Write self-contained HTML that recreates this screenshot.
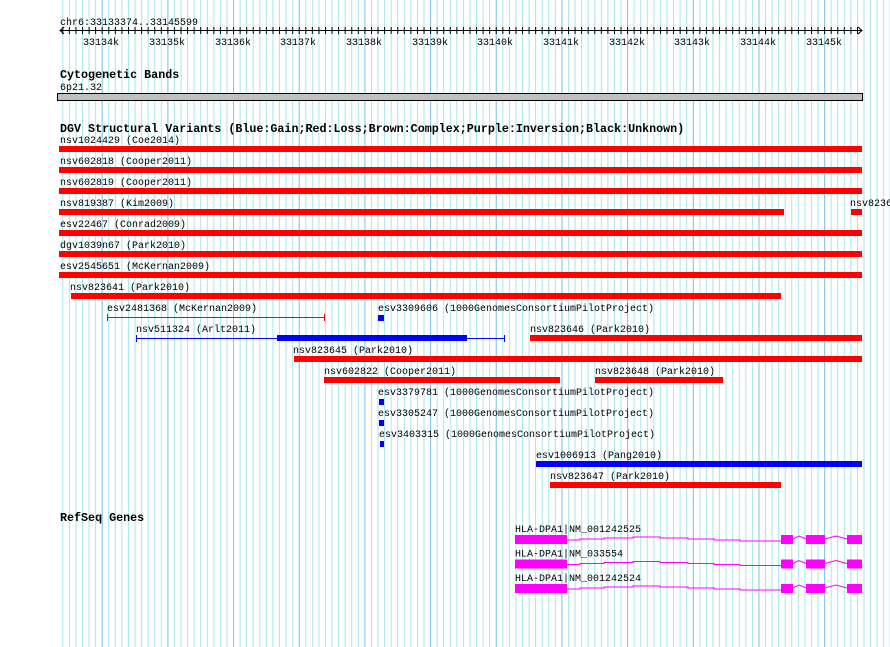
<!DOCTYPE html>
<html><head><meta charset="utf-8"><style>
html,body{margin:0;padding:0;background:#fff;}
svg{display:block;}
text{font-family:"Liberation Mono",monospace;font-size:10px;fill:#000;}
.b{font-weight:bold;font-size:11.7px;}
</style></head><body>
<svg width="890" height="647" xmlns="http://www.w3.org/2000/svg">
<defs>
<pattern id="mn" x="101.7" y="0" width="6.5675" height="647" patternUnits="userSpaceOnUse"><rect x="0" y="0" width="1" height="647" fill="#a8e4ee"/></pattern>
<pattern id="mj" x="101.7" y="0" width="65.675" height="647" patternUnits="userSpaceOnUse"><rect x="0" y="0" width="1" height="647" fill="#88c4e8"/></pattern>
<pattern id="tk" x="101.7" y="0" width="6.5675" height="647" patternUnits="userSpaceOnUse"><rect x="0" y="27" width="1" height="7" fill="#000"/></pattern>
<g id="gs">
<rect x="515" y="535" width="52" height="9" fill="#f0f"/>
<polyline points="567,540 580,540 580,539 604,539 604,538 633,538 633,537 660,537 660,538 688,538 688,539 714,539 714,540 740,540 740,541 781,541" fill="none" stroke="#f0f"/>
<rect x="781" y="535" width="12" height="9" fill="#f0f"/>
<polyline points="793,539 799,536 806,539" fill="none" stroke="#f0f"/>
<rect x="806" y="535" width="19" height="9" fill="#f0f"/>
<polyline points="825,539 836,536 847,539" fill="none" stroke="#f0f"/>
<rect x="847" y="535" width="15" height="9" fill="#f0f"/>
</g>
</defs>
<rect x="59" y="0" width="831" height="647" fill="url(#mn)"/>
<rect x="59" y="0" width="831" height="647" fill="url(#mj)"/>
<text x="60" y="25">chr6:33133374..33145599</text>
<rect x="60" y="30" width="802" height="1" fill="#000"/>
<rect x="60" y="0" width="802" height="647" fill="url(#tk)" clip-path="inset(27px 0 613px 0)"/>
<path d="M64 27 L60 30.5 L64 34 M858 27 L862 30.5 L858 34" stroke="#000" fill="none"/>
<g text-anchor="middle">
<text x="101" y="45">33134k</text><text x="167" y="45">33135k</text><text x="233" y="45">33136k</text><text x="298" y="45">33137k</text><text x="364" y="45">33138k</text><text x="430" y="45">33139k</text><text x="495" y="45">33140k</text><text x="561" y="45">33141k</text><text x="627" y="45">33142k</text><text x="692" y="45">33143k</text><text x="758" y="45">33144k</text><text x="824" y="45">33145k</text>
</g>
<text class="b" x="60" y="78">Cytogenetic Bands</text>
<text x="60" y="90">6p21.32</text>
<rect x="57.5" y="93.5" width="805" height="7" fill="#c0c0c0" stroke="#000"/>
<text class="b" x="60" y="132">DGV Structural Variants (Blue:Gain;Red:Loss;Brown:Complex;Purple:Inversion;Black:Unknown)</text>
<g>
<text x="60" y="143">nsv1024429 (Coe2014)</text><rect x="59" y="146" width="803" height="6" fill="#f00"/>
<text x="60" y="164">nsv602818 (Cooper2011)</text><rect x="59" y="167" width="803" height="6" fill="#f00"/>
<text x="60" y="185">nsv602819 (Cooper2011)</text><rect x="59" y="188" width="803" height="6" fill="#f00"/>
<text x="60" y="206">nsv819387 (Kim2009)</text><rect x="59" y="209" width="725" height="6" fill="#f00"/>
<text x="850" y="206">nsv823647</text><rect x="851" y="209" width="11" height="6" fill="#f00"/>
<text x="60" y="227">esv22467 (Conrad2009)</text><rect x="59" y="230" width="803" height="6" fill="#f00"/>
<text x="60" y="248">dgv1039n67 (Park2010)</text><rect x="59" y="251" width="803" height="6" fill="#f00"/>
<text x="60" y="269">esv2545651 (McKernan2009)</text><rect x="59" y="272" width="803" height="6" fill="#f00"/>
<text x="70" y="290">nsv823641 (Park2010)</text><rect x="71" y="293" width="710" height="6" fill="#f00"/>
<text x="107" y="311">esv2481368 (McKernan2009)</text>
<rect x="107" y="317" width="218" height="1" fill="#f00"/><rect x="107" y="314" width="1" height="7" fill="#f00"/><rect x="324" y="314" width="1" height="7" fill="#f00"/>
<text x="378" y="311">esv3309606 (1000GenomesConsortiumPilotProject)</text><rect x="378" y="315" width="6" height="6" fill="#00f"/>
<text x="136" y="332">nsv511324 (Arlt2011)</text>
<rect x="136" y="338" width="369" height="1" fill="#00f"/><rect x="136" y="335" width="1" height="7" fill="#00f"/><rect x="504" y="335" width="1" height="7" fill="#00f"/>
<rect x="277" y="335" width="190" height="6" fill="#00f"/>
<text x="530" y="332">nsv823646 (Park2010)</text><rect x="530" y="335" width="332" height="6" fill="#f00"/>
<text x="293" y="353">nsv823645 (Park2010)</text><rect x="294" y="356" width="568" height="6" fill="#f00"/>
<text x="324" y="374">nsv602822 (Cooper2011)</text><rect x="324" y="377" width="236" height="6" fill="#f00"/>
<text x="595" y="374">nsv823648 (Park2010)</text><rect x="595" y="377" width="128" height="6" fill="#f00"/>
<text x="378" y="395">esv3379781 (1000GenomesConsortiumPilotProject)</text><rect x="379" y="399" width="5" height="6" fill="#00f"/>
<text x="378" y="416">esv3305247 (1000GenomesConsortiumPilotProject)</text><rect x="379" y="420" width="5" height="6" fill="#00f"/>
<text x="379" y="437">esv3403315 (1000GenomesConsortiumPilotProject)</text><rect x="380" y="441" width="4" height="6" fill="#00f"/>
<text x="536" y="458">esv1006913 (Pang2010)</text><rect x="536" y="461" width="326" height="6" fill="#00f"/>
<text x="550" y="479">nsv823647 (Park2010)</text><rect x="550" y="482" width="231" height="6" fill="#f00"/>
</g>
<text class="b" x="60" y="521">RefSeq Genes</text>
<text x="515" y="532">HLA-DPA1|NM_001242525</text>
<use href="#gs"/>
<text x="515" y="556.5">HLA-DPA1|NM_033554</text>
<use href="#gs" y="24.5"/>
<text x="515" y="581">HLA-DPA1|NM_001242524</text>
<use href="#gs" y="49"/>
</svg>
</body></html>
